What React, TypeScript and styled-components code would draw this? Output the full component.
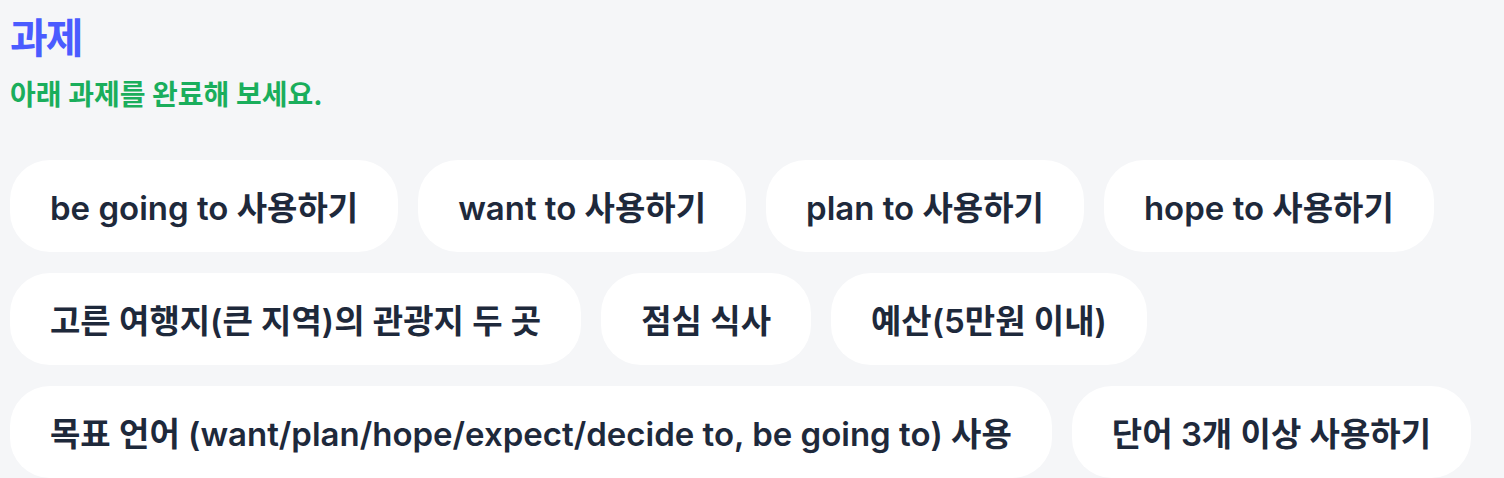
import React from 'react';
import styled, {createGlobalStyle} from 'styled-components';

const GlobalStyle = createGlobalStyle`
  html, body {
    margin: 0;
    padding: 0;
    background: #f5f6f8;
  }
  body {
    font-family: "Inter", "Noto Sans CJK KR", sans-serif;
  }
`;

const Section = styled.section`
  padding: 10px 10px 0 10px;
`;

const Heading = styled.h2`
  margin: 0;
  font-size: 41px;
  line-height: 56px;
  font-weight: 700;
  letter-spacing: -2px;
  color: #4a5bff;
`;

const SubHeading = styled.p`
  margin: 12px 0 0 0;
  font-size: 28px;
  line-height: 34px;
  font-weight: 700;
  color: #1aae5c;
`;

const TaskList = styled.ul`
  list-style: none;
  margin: 48px 0 0 0;
  padding: 0;
  display: flex;
  flex-wrap: wrap;
  gap: 21px 20px;
`;

const TaskChip = styled.li`
  height: 92px;
  padding: 0 40px;
  display: flex;
  align-items: center;
  background: #ffffff;
  border-radius: 40px;
  font-size: 33px;
  font-weight: 600;
  color: #1e293b;
  white-space: nowrap;
`;

const tasks = [
  'be going to 사용하기',
  'want to 사용하기',
  'plan to 사용하기',
  'hope to 사용하기',
  '고른 여행지(큰 지역)의 관광지 두 곳',
  '점심 식사',
  '예산(5만원 이내)',
  '목표 언어 (want/plan/hope/expect/decide to, be going to) 사용',
  '단어 3개 이상 사용하기',
];

const App = () => {
  return (
    <>
      <GlobalStyle />
      <Section>
        <Heading>과제</Heading>
        <SubHeading>아래 과제를 완료해 보세요.</SubHeading>
        <TaskList>
          {tasks.map((task) => (
            <TaskChip key={task}>{task}</TaskChip>
          ))}
        </TaskList>
      </Section>
    </>
  );
};

export default App;
